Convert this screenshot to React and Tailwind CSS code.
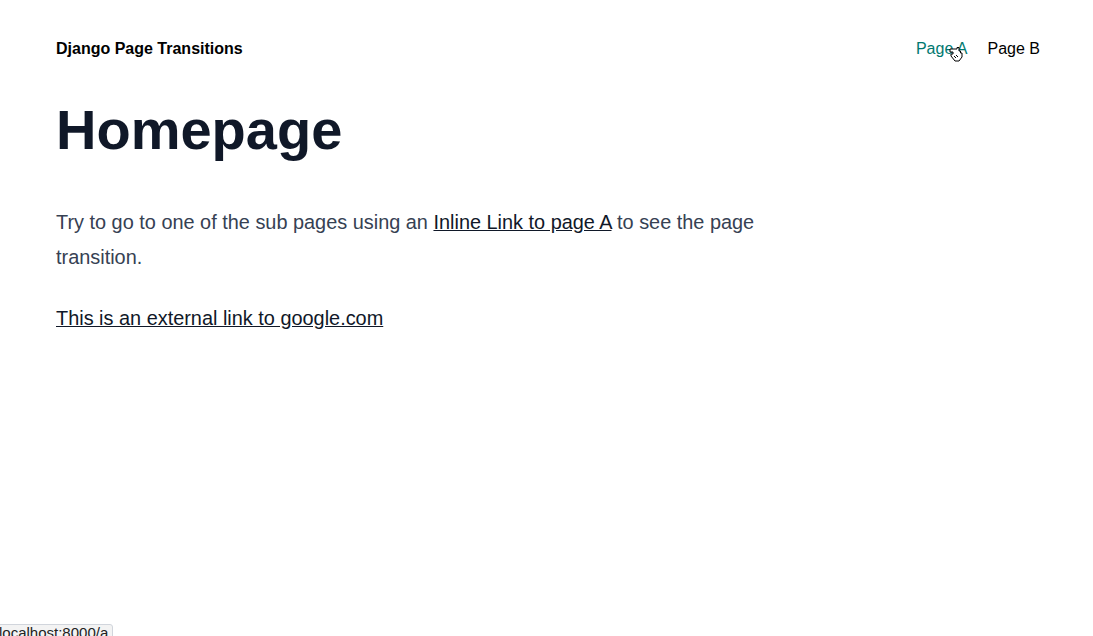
import React from "react";

const Cursor = () => (
  <svg width="16" height="18" viewBox="0 0 16 18" className="absolute left-[948px] top-[45px]">
    <path
      d="M2 4 L9 4 L9 2.5 L11 2.5 L11 6 L12.5 6 L12.5 8 L14 8 L14 12 L11 16 L7 16 L3 11 L3 9 L5 9 L5 7 L2 7 Z"
      fill="#fff"
      stroke="#000"
      strokeWidth="1"
    />
    <path d="M6 11 L8 13 M8 10 L10 12" stroke="#000" strokeWidth="1" />
  </svg>
);

const App = () => {
  return (
    <div className="relative min-h-[636px] bg-white" style={{ fontFamily: '"Liberation Sans", Arial, sans-serif' }}>
      {/* Navbar */}
      <header className="flex items-center justify-between h-24 pt-[2px] pl-14 pr-[53px]">
        <a href="/" className="text-base font-bold text-black">
          Django Page Transitions
        </a>
        <nav className="flex gap-5 text-base">
          <a href="/a" className="text-teal-700">Page A</a>
          <a href="/b" className="text-black">Page B</a>
        </nav>
      </header>

      {/* Content */}
      <main className="px-14">
        <div className="max-w-[723px]">
          <h1 className="mt-[6px] mb-[47px] text-[56px] leading-none font-extrabold text-gray-900">
            Homepage
          </h1>
          <p className="text-[19.9px] leading-[35px] text-gray-700 mb-[26px]">
            Try to go to one of the sub pages using an{" "}
            <a href="/a" className="text-gray-900 underline">Inline Link to page A</a>{" "}
            to see the page transition.
          </p>
          <p className="text-[19.9px] leading-[35px] text-gray-700">
            <a href="https://google.com" className="text-gray-900 underline">
              This is an external link to google.com
            </a>
          </p>
        </div>
      </main>

      <Cursor />

      {/* Status bubble */}
      <div className="absolute left-[-6px] top-[624px] h-[14px] pl-[4px] pr-[4px] border border-gray-300 rounded-tr-[3px] bg-[#f3f3f3] text-[15px] leading-[16px] text-[#222] overflow-hidden">
        localhost:8000/a
      </div>
    </div>
  );
};

export default App;
